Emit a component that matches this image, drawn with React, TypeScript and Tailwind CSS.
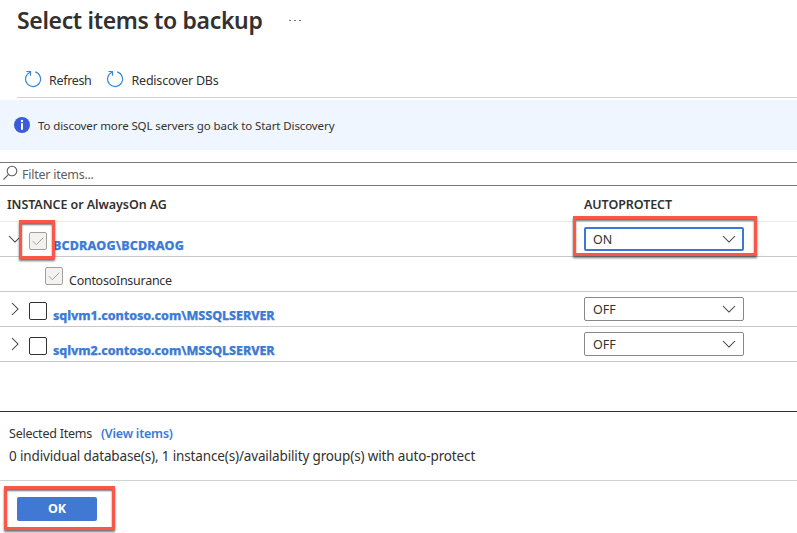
import type { ReactNode } from "react";

function RefreshIcon() {
  return (
    <svg width="18" height="18" viewBox="0 0 18 18" fill="none" stroke="#3a86dc" strokeWidth="1.2" className="mt-px shrink-0">
      <path d="M11.2 1.9A7.5 7.5 0 1 1 6.1 2.2" />
      <path d="M2.4 1.5h4.1v4.2" />
    </svg>
  );
}

function Chevron({ className = "", dir }: { className?: string; dir: "down" | "right" }) {
  return (
    <svg width="14" height="14" viewBox="0 0 14 14" fill="none" stroke="#3b3a39" strokeWidth="1.05" className={`shrink-0 ${className}`}>
      <path d={dir === "down" ? "M1 4l6 6 6-6" : "M4 1l6 6-6 6"} />
    </svg>
  );
}

function Checkbox({ checked = false }: { checked?: boolean }) {
  return (
    <span className={`flex h-[18px] w-[18px] shrink-0 items-center justify-center rounded-[2px] border ${checked ? "border-[#a19f9d] bg-[#f3f2f1]" : "border-[#323130] bg-white"}`}>
      {checked && (
        <svg width="12" height="12" viewBox="0 0 12 12" fill="none" stroke="#a19f9d" strokeWidth="1">
          <path d="M.8 6.2l3.5 3.5 7-7" />
        </svg>
      )}
    </span>
  );
}

function Select({ value, active = false }: { value: string; active?: boolean }) {
  return (
    <div className={`flex h-6 w-40 items-center justify-between rounded-[2px] bg-white text-[12.5px] ${active ? "border-2 border-[#3b78d4] pr-[6px] pl-[7px]" : "border border-[#8a8886] pr-[7px] pl-2"}`}>
      <span className="pt-[2px]">{value}</span>
      <Chevron dir="down" />
    </div>
  );
}

function Highlight({ className }: { className: string }) {
  return (
    <div className={`pointer-events-none absolute z-10 border-3 border-[#fb5748] shadow-[0_2px_2px_rgba(0,0,0,0.55),inset_0_2px_2px_rgba(0,0,0,0.55)] ${className}`} />
  );
}

function Row({ children, select }: { children: ReactNode; select?: ReactNode }) {
  return (
    <div className="flex h-[35px] border-b border-[#c8c8c8]">
      <div className="flex w-[584px] items-start">{children}</div>
      <div className="pt-[5px]">{select}</div>
    </div>
  );
}

function Instance({ name, open = false, value }: { name: string; open?: boolean; value: string }) {
  return (
    <Row select={<div className="relative"><Select value={value} active={open} />{open && <Highlight className="-top-[11px] -left-[11px] h-10 w-[184px]" />}</div>}>
      <Chevron dir={open ? "down" : "right"} className="mt-[10px] ml-[8px]" />
      <div className="relative mt-[10px] ml-[7px]">
        <Checkbox checked={open} />
        {open && <Highlight className="-top-[12px] -left-[10px] h-[39px] w-9" />}
      </div>
      <a className={`mt-[15px] ml-[6px] text-[12.5px] leading-[18px] font-extrabold whitespace-nowrap text-[#3b7bd6] [-webkit-text-stroke:0.25px_#3b7bd6] ${open ? "tracking-[0.17px]" : "tracking-[-0.07px]"}`}>{name}</a>
    </Row>
  );
}

export default function App() {
  return (
    <div className="h-[533px] w-[797px] overflow-hidden bg-white font-['Noto_Sans',sans-serif] text-[12.5px] text-[#323130]">
      <header className="flex h-[60px] items-start pl-[17px]">
        <h1 className="mt-[4px] text-[23px] leading-8 font-semibold tracking-[-0.35px] whitespace-nowrap">Select items to backup</h1>
        <div className="mt-[20px] ml-[27px] flex gap-[3px]">
          <i className="h-px w-[2px] bg-[#777]" />
          <i className="h-px w-[2px] bg-[#777]" />
          <i className="h-px w-[2px] bg-[#777]" />
        </div>
      </header>
      <nav className="ml-[17px] flex h-[38px] items-center border-b border-[#d2d2d2] pl-[7px]">
        <RefreshIcon />
        <span className="mt-[5px] ml-[7px] w-[42px] tracking-[-0.33px] whitespace-nowrap">Refresh</span>
        <span className="ml-[15px] flex"><RefreshIcon /></span>
        <span className="mt-[5px] ml-[7.5px] tracking-[-0.22px] whitespace-nowrap">Rediscover DBs</span>
      </nav>
      <section className="mt-[2px] flex h-[50px] items-center bg-[#eff6ff] pl-[14px]">
        <svg width="16" height="16" viewBox="0 0 16 16">
          <circle cx="8" cy="8" r="8" fill="#3b5bdb" />
          <circle cx="8" cy="4" r="1.2" fill="white" />
          <path d="M7 6.3h2v6.5H7z" fill="white" />
        </svg>
        <span className="mt-[2px] ml-2 text-[11.5px] tracking-[-0.1px]">To discover more SQL servers go back to Start Discovery</span>
      </section>
      <div className="mt-3 flex h-6 items-center border-y border-[#7a7978] pl-[3px] text-[#605e5c]">
        <svg width="15" height="16" viewBox="0 0 15 16" fill="none" stroke="#605e5c" strokeWidth="1.1" className="-mt-[2px]">
          <circle cx="9" cy="6" r="4.8" />
          <path d="M5.6 9.4L.5 14.5" />
        </svg>
        <span className="mt-[2px] ml-1 tracking-[-0.25px]">Filter items...</span>
      </div>
      <div className="flex h-9 items-center border-b border-[#e9e9e9] pt-[3px] pl-[7px] font-semibold tracking-[-0.07px]">
        <span className="w-[577px]">INSTANCE or AlwaysOn AG</span>
        <span>AUTOPROTECT</span>
      </div>
      <Instance name="BCDRAOG\BCDRAOG" open value="ON" />
      <Row>
        <div className="mt-[10px] ml-[45px]"><Checkbox checked /></div>
        <span className="mt-[15px] ml-[6px] leading-[18px] tracking-[-0.27px]">ContosoInsurance</span>
      </Row>
      <Instance name="sqlvm1.contoso.com\MSSQLSERVER" value="OFF" />
      <Instance name="sqlvm2.contoso.com\MSSQLSERVER" value="OFF" />
      <footer className="mt-[49px] border-t border-[#323130]">
        <div className="flex h-[69px] flex-col gap-[5px] border-b border-[#d2d2d2] pt-[13px] pl-[9px] leading-[18px]">
          <div className="flex tracking-[-0.22px]"><span className="w-[92px]">Selected Items</span><a className="font-semibold text-[#3b7bd6]">(View items)</a></div>
          <p className="-mt-px text-[13.5px] tracking-[-0.14px]">0 individual database(s), 1 instance(s)/availability group(s) with auto-protect</p>
        </div>
        <div className="relative mt-4 ml-[17px] h-6 w-20">
          <button className="h-6 w-20 rounded-[2px] bg-[#4178d4] font-bold text-white">OK</button>
          <Highlight className="-top-[11px] -left-[13px] h-11 w-[111px]" />
        </div>
      </footer>
    </div>
  );
}
